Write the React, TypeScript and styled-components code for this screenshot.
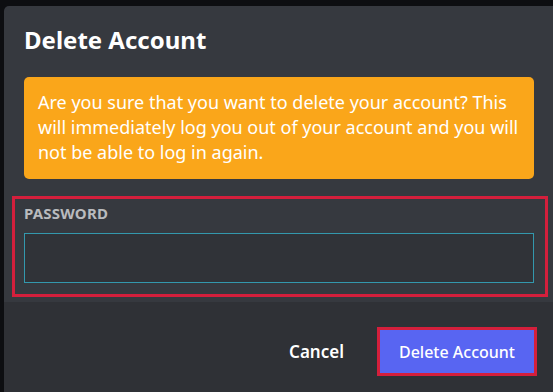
import React from 'react'
import styled, { createGlobalStyle } from 'styled-components'

const GlobalStyle = createGlobalStyle`
  html, body {
    margin: 0;
    padding: 0;
    background: #0d0e11;
    overflow: hidden;
  }
  * {
    box-sizing: border-box;
  }
`

const Backdrop = styled.div`
  width: 553px;
  height: 392px;
  padding: 6px 0 0 4px;
  font-family: "Noto Sans", "Open Sans", sans-serif;
`

const Modal = styled.div`
  height: 386px;
  background: #36393f;
  border-radius: 5px 0 0 0;
  display: flex;
  flex-direction: column;
  overflow: hidden;
`

const Body = styled.div`
  padding: 19px 19px 0 20px;
`

const Title = styled.h2`
  margin: 0;
  font-size: 24px;
  line-height: 30px;
  font-weight: 700;
  color: #ffffff;
`

const Warning = styled.div`
  margin-top: 22px;
  background: #faa61a;
  border-radius: 5px;
  padding: 13px 14px 14px;
  color: #ffffff;
  font-size: 18px;
  line-height: 25px;
`

const Field = styled.div`
  margin: 17px -14px 0 -12px;
  border: 3px solid #d41f3c;
  padding: 5px 11px 11px 9px;
  display: flex;
  flex-direction: column;
  gap: 11px;
`

const Label = styled.label`
  font-size: 15px;
  line-height: 18px;
  font-weight: 700;
  color: #b9bbbe;
  letter-spacing: 0.2px;
`

const Input = styled.input`
  height: 50px;
  width: 100%;
  background: #303338;
  border: 1px solid #3398ad;
  outline: none;
  color: #dcddde;
  font-size: 18px;
  padding: 0 12px;
`

const Footer = styled.div`
  margin-top: 5px;
  flex: 1;
  background: #2f3136;
  display: flex;
  justify-content: flex-end;
  align-items: flex-start;
  gap: 14px;
  padding: 25px 16px 0 0;
`

const Button = styled.button<{ $primary?: boolean }>`
  height: 49px;
  font-family: inherit;
  font-size: ${p => (p.$primary ? '16px' : '17px')};
  font-weight: ${p => (p.$primary ? 500 : 600)};
  color: #ffffff;
  cursor: pointer;
  padding: ${p => (p.$primary ? '0 19px' : '0 16px')};
  background: ${p => (p.$primary ? '#5865f2' : 'transparent')};
  border: ${p => (p.$primary ? '3px solid #d41f3c' : '3px solid transparent')};
`

export default function App() {
  return (
    <>
      <GlobalStyle />
      <Backdrop>
        <Modal>
          <Body>
            <Title>Delete Account</Title>
            <Warning>
              Are you sure that you want to delete your account? This will immediately log you out
              of your account and you will not be able to log in again.
            </Warning>
            <Field>
              <Label>PASSWORD</Label>
              <Input type="password" />
            </Field>
          </Body>
          <Footer>
            <Button>Cancel</Button>
            <Button $primary>Delete Account</Button>
          </Footer>
        </Modal>
      </Backdrop>
    </>
  )
}
